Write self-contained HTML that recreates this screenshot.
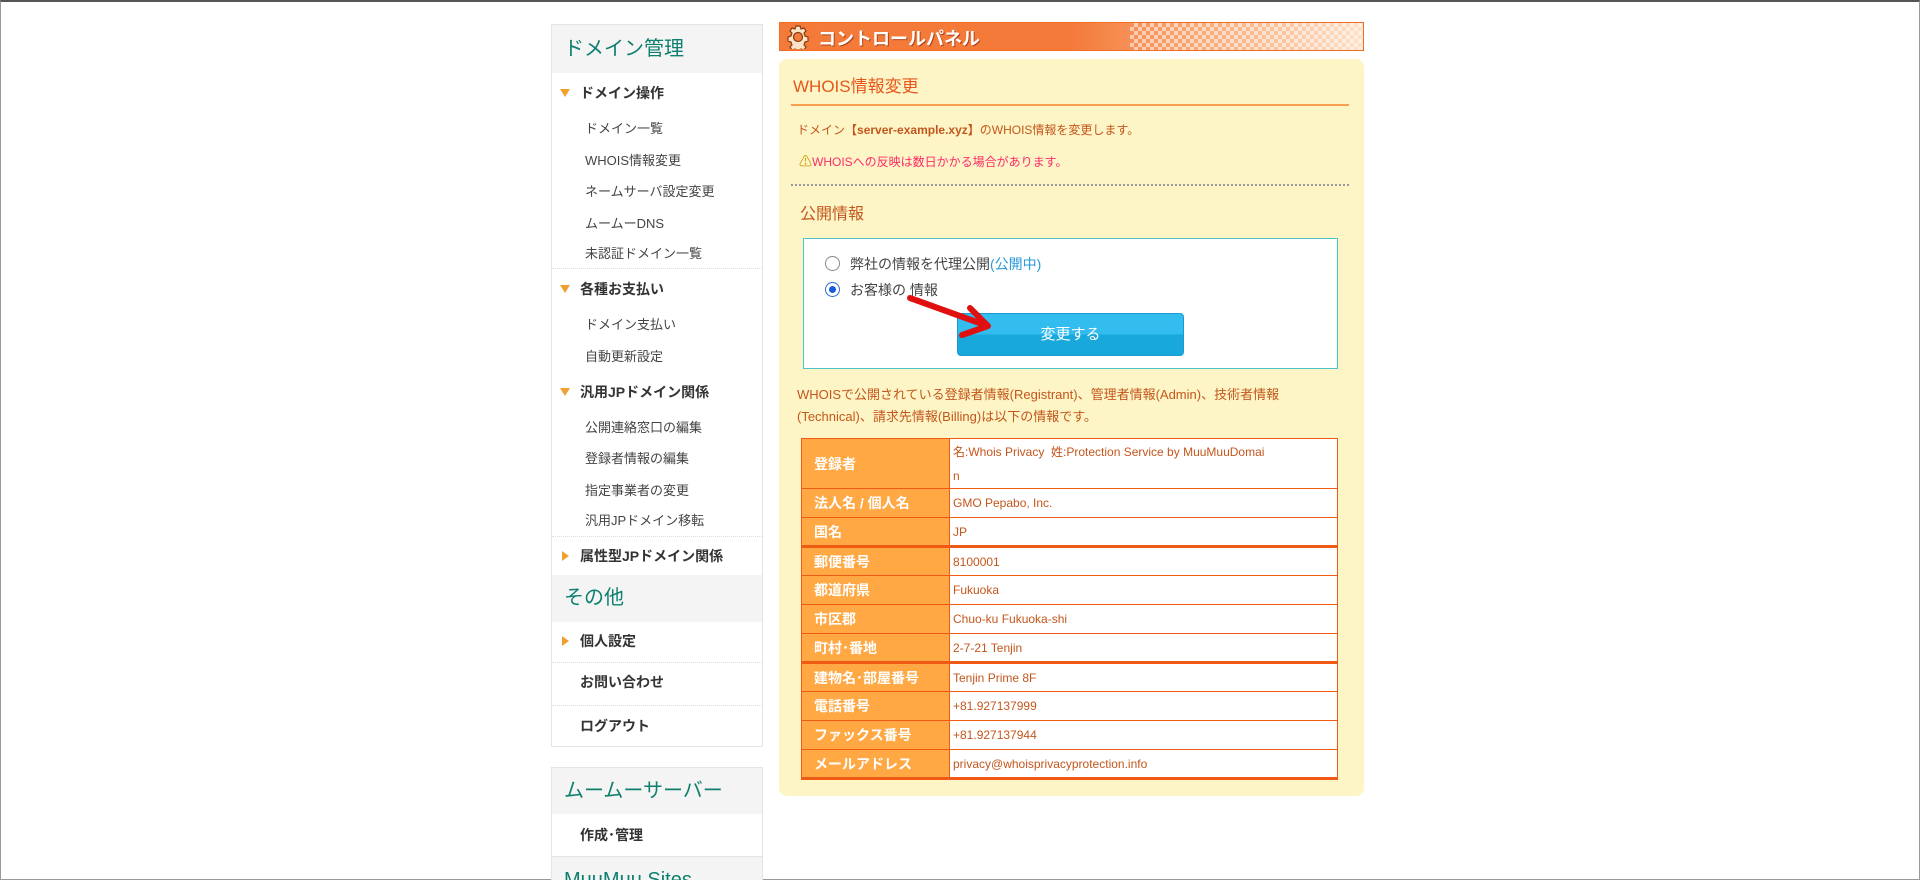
<!DOCTYPE html>
<html><head><meta charset="utf-8"><style>
*{margin:0;padding:0;box-sizing:border-box}
html,body{width:1920px;height:880px;overflow:hidden;background:#fff}
body{font-family:"Liberation Sans","Noto Sans CJK JP",sans-serif;position:relative;border:1px solid #999;border-top:2px solid #555}
#w{position:absolute;left:-1px;top:-2px;width:1920px;height:884px}
.a{position:absolute;white-space:nowrap}
#side{position:absolute;left:551px;top:24px;width:212px;height:723px;border:1px solid #e4e4e4;background:#fff}
.hd{position:absolute;left:0;width:210px;background:#f4f4f4;color:#0e7f6e;font-size:20px;padding-left:12px}
.b{position:absolute;left:28px;font-size:14px;font-weight:bold;color:#333}
.s{position:absolute;left:33px;font-size:13px;color:#444}
.tri{position:absolute;left:8px;width:0;height:0;border-left:5px solid transparent;border-right:5px solid transparent;border-top:8px solid #f0a030}
.trr{position:absolute;left:10px;width:0;height:0;border-top:5px solid transparent;border-bottom:5px solid transparent;border-left:7px solid #f0a030}
.sep{position:absolute;left:0;width:210px;border-top:1px dotted #ddd}
#bar{position:absolute;left:779px;top:22px;width:585px;height:29px;border:1px solid #f26d22;background:linear-gradient(90deg,#f47a3a 0%,#f47a3a 50%,#f9b080 75%,#fde0c8 100%)}
#bar:after{content:"";position:absolute;right:0;top:0;width:40%;height:100%;background-image:linear-gradient(45deg,#fff 25%,transparent 25%,transparent 75%,#fff 75%),linear-gradient(45deg,#fff 25%,transparent 25%,transparent 75%,#fff 75%);background-size:8px 8px;background-position:0 0,4px 4px;opacity:.55}
#box{position:absolute;left:779px;top:59px;width:585px;height:737px;background:#fdf5c6;border-radius:8px}
.br{color:#c4561c}
table{position:absolute;left:801px;top:438px;width:537px;border-collapse:collapse;font-size:12px}
td{border:1px solid #f05a14;height:29px;padding:0 3px;color:#c4561c;background:#fff}
td.l{background:#ffa844;color:#fff;font-weight:bold;font-size:14px;width:148px;padding-left:12px}
tr.tk td{border-bottom:3px solid #f05a14}
</style></head><body><div id="w">
<div id="side">
 <div class="hd" style="top:0;height:48px;line-height:48px">ドメイン管理</div>
 <div class="tri" style="top:64px"></div><div class="b" style="top:58px">ドメイン操作</div>
 <div class="s" style="top:93px">ドメイン一覧</div>
 <div class="s" style="top:125px">WHOIS情報変更</div>
 <div class="s" style="top:156px">ネームサーバ設定変更</div>
 <div class="s" style="top:188px">ムームーDNS</div>
 <div class="s" style="top:218px">未認証ドメイン一覧</div>
 <div class="sep" style="top:243px"></div>
 <div class="tri" style="top:260px"></div><div class="b" style="top:254px">各種お支払い</div>
 <div class="s" style="top:289px">ドメイン支払い</div>
 <div class="s" style="top:321px">自動更新設定</div>
 <div class="tri" style="top:363px"></div><div class="b" style="top:357px">汎用JPドメイン関係</div>
 <div class="s" style="top:392px">公開連絡窓口の編集</div>
 <div class="s" style="top:423px">登録者情報の編集</div>
 <div class="s" style="top:455px">指定事業者の変更</div>
 <div class="s" style="top:485px">汎用JPドメイン移転</div>
 <div class="sep" style="top:511px"></div>
 <div class="trr" style="top:526px"></div><div class="b" style="top:521px">属性型JPドメイン関係</div>
 <div class="hd" style="top:550px;height:47px;line-height:47px">その他</div>
 <div class="trr" style="top:611px"></div><div class="b" style="top:606px">個人設定</div>
 <div class="sep" style="top:637px"></div>
 <div class="b" style="top:647px">お問い合わせ</div>
 <div class="sep" style="top:680px"></div>
 <div class="b" style="top:691px">ログアウト</div>
</div>
<div id="side2" style="position:absolute;left:551px;top:767px;width:212px;height:120px;border:1px solid #e4e4e4;background:#fff">
 <div class="hd" style="top:0;height:46px;line-height:46px">ムームーサーバー</div>
 <div class="b" style="top:57px">作成･管理</div>
 <div class="sep" style="top:88px;border-top:1px solid #e4e4e4"></div>
 <div class="hd" style="top:89px;height:46px;line-height:46px">MuuMuu Sites</div>
</div>
<div id="bar"><svg style="position:absolute;left:6px;top:2px" width="24" height="24" viewBox="0 0 24 24"><g fill="#fbe3c8" stroke="#8a3a10" stroke-width="1.2"><path d="M10 1h4l1 3 3-1 2 3-2 2 1 3 3 1v4l-3 1-1 3 2 2-2 3-3-1-1 3h-4l-1-3-3 1-2-3 2-2-1-3-3-1v-4l3-1 1-3-2-2 2-3 3 1z"/><circle cx="12" cy="12" r="4.5" fill="#f47a3a"/></g></svg><div class="a" style="left:38px;top:2px;color:#fff;font-weight:bold;font-size:18px;text-shadow:1px 1px 0 #b04010;z-index:1">コントロールパネル</div></div>
<div id="box"></div>
<div class="a" style="left:793px;top:72px;font-size:17px;color:#e8561c">WHOIS情報変更</div>
<div class="a" style="left:791px;top:104px;width:558px;border-top:2px solid #f9a050"></div>
<div class="a br" style="left:797px;top:121px;font-size:12px">ドメイン<b>【server-example.xyz】</b>のWHOIS情報を変更します。</div>
<div class="a" style="left:799px;top:151px;font-size:12px;color:#ff2a6a"><span style="color:#c90;font-size:13px">⚠</span>WHOISへの反映は数日かかる場合があります。</div>
<div class="a" style="left:791px;top:184px;width:558px;border-top:2px dotted #999"></div>
<div class="a br" style="left:800px;top:200px;font-size:16px">公開情報</div>
<div class="a" style="left:803px;top:238px;width:535px;height:131px;background:#fff;border:1px solid #4cc4c8"></div>
<div class="a" style="left:825px;top:256px;width:15px;height:15px;border:1px solid #888;border-radius:50%;background:#fff"></div>
<div class="a" style="left:850px;top:254px;font-size:14px;color:#444">弊社の情報を代理公開<span style="color:#2a9ad8">(公開中)</span></div>
<div class="a" style="left:825px;top:282px;width:15px;height:15px;border:1px solid #2a6ad8;border-radius:50%;background:#fff"><div style="margin:3px;width:7px;height:7px;border-radius:50%;background:#1a5adc"></div></div>
<div class="a" style="left:850px;top:280px;font-size:14px;color:#444">お客様の 情報</div>
<div class="a" style="left:957px;top:313px;width:227px;height:43px;border-radius:4px;background:linear-gradient(#33bdef 0%,#33bdef 48%,#18a8dc 52%,#18a8dc 100%);border:1px solid #1a9ad0;color:#fff;font-size:15px;text-align:center;line-height:42px">変更する</div>
<svg class="a" style="left:900px;top:290px" width="100" height="50"><path d="M10 8 L85 35 M70 18 L88 36 L62 45" stroke="#e01010" stroke-width="6" fill="none" stroke-linecap="round" stroke-linejoin="round"/></svg>
<div class="a br" style="left:797px;top:384px;font-size:13px;line-height:22px">WHOISで公開されている登録者情報(Registrant)、管理者情報(Admin)、技術者情報<br>(Technical)、請求先情報(Billing)は以下の情報です。</div>
<table>
<tr><td class="l" style="height:50px">登録者</td><td style="line-height:24px">名:Whois Privacy&nbsp; 姓:Protection Service by MuuMuuDomai<br>n</td></tr>
<tr><td class="l">法人名 / 個人名</td><td>GMO Pepabo, Inc.</td></tr>
<tr class="tk"><td class="l">国名</td><td>JP</td></tr>
<tr><td class="l">郵便番号</td><td>8100001</td></tr>
<tr><td class="l">都道府県</td><td>Fukuoka</td></tr>
<tr><td class="l">市区郡</td><td>Chuo-ku Fukuoka-shi</td></tr>
<tr class="tk"><td class="l">町村･番地</td><td>2-7-21 Tenjin</td></tr>
<tr><td class="l">建物名･部屋番号</td><td>Tenjin Prime 8F</td></tr>
<tr><td class="l">電話番号</td><td>+81.927137999</td></tr>
<tr><td class="l">ファックス番号</td><td>+81.927137944</td></tr>
<tr class="tk"><td class="l">メールアドレス</td><td>privacy@whoisprivacyprotection.info</td></tr>
</table>
</div></body></html>
